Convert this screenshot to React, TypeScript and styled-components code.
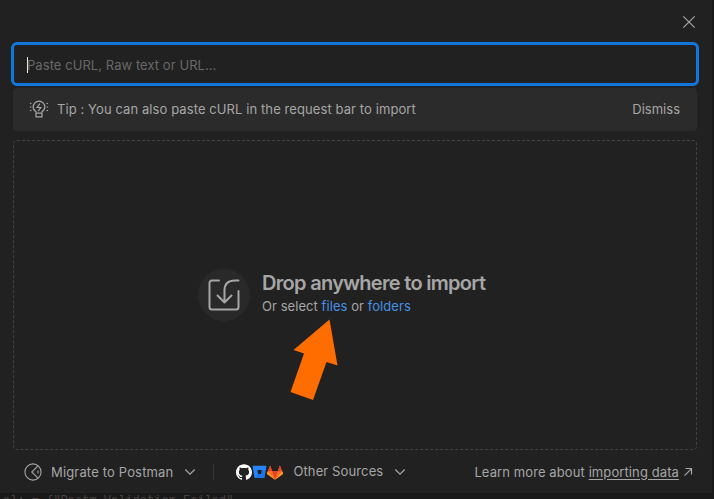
import React from 'react';
import styled, { createGlobalStyle } from 'styled-components';
import { SiGithub } from 'react-icons/si';

const GlobalStyle = createGlobalStyle`
  * { box-sizing: border-box; }
  html, body { margin: 0; padding: 0; background: #171717; overflow: hidden; }
  body { font-family: Inter, "Liberation Sans", sans-serif; font-size: 13px; color: #a6a6a6; }
`;

const Page = styled.div`
  width: 714px;
  height: 499px;
  overflow: hidden;
  background: #191919;
`;

const Dialog = styled.section`
  width: 712px;
  height: 493px;
  padding: 0 15px 0 13px;
  background: #212121;
  display: flex;
  flex-direction: column;
`;

const Header = styled.header`
  height: 42px;
  display: flex;
  flex-shrink: 0;
  justify-content: flex-end;
  padding: 15px 1px 0 0;
`;

const IconButton = styled.button`
  width: 14px;
  height: 14px;
  padding: 0;
  border: 0;
  background: none;
  color: #a6a6a6;
  svg { display: block; }
`;

const InputField = styled.div`
  height: 44px;
  flex-shrink: 0;
  margin: 0 -2px;
  padding-left: 13px;
  border: 3px solid #1277dc;
  border-radius: 6px;
  display: flex;
  align-items: center;
`;

const Caret = styled.span`
  width: 1px;
  height: 16px;
  margin-top: 2px;
  background: #f0f0f0;
`;

const Placeholder = styled.span`
  color: #686868;
  letter-spacing: 0.06px;
  margin-left: -1px;
  padding-top: 2px;
`;

const Tip = styled.div`
  height: 43px;
  flex-shrink: 0;
  margin-top: 2px;
  padding: 0 17px 2px 16px;
  border-radius: 4px;
  background: #2b2b2b;
  display: flex;
  align-items: center;
  svg { flex-shrink: 0; }
`;

const TipText = styled.span`
  flex: 1;
  margin-left: 8px;
  letter-spacing: 0.09px;
`;

const DropZone = styled.main`
  height: 310px;
  flex-shrink: 0;
  margin-top: 9px;
  border: 1px dashed #424242;
  border-radius: 4px;
  display: flex;
  align-items: flex-start;
  padding: 128px 0 0 184px;
  position: relative;
`;

const DropIcon = styled.div`
  width: 52px;
  height: 52px;
  border-radius: 50%;
  background: #292929;
  display: grid;
  place-items: center;
  margin-right: 12px;
`;

const DropText = styled.div`
  padding-top: 2px;
`;

const Title = styled.h1`
  margin: 0;
  font-size: 20px;
  line-height: 25px;
  font-weight: 600;
  letter-spacing: -0.7px;
`;

const Subtitle = styled.p`
  margin: 0;
  line-height: 20px;
  letter-spacing: 0.06px;
`;

const Link = styled.a`
  color: #4391e6;
`;

const Pointer = styled.svg`
  position: absolute;
  left: 274px;
  top: 177px;
`;

const Footer = styled.footer`
  flex: 1;
  display: flex;
  align-items: center;
  padding: 0 3px 0 11px;
`;

const Label = styled.span<{ $gap: number; $spacing: number; $lift?: number }>`
  margin-left: ${p => p.$gap}px;
  padding-bottom: ${p => p.$lift ?? 0}px;
  letter-spacing: ${p => p.$spacing}px;
  white-space: nowrap;
`;

const Chevron = styled.svg`
  margin-left: 11px;
`;

const Divider = styled.i`
  width: 1px;
  height: 16px;
  margin: 0 22px 0 17px;
  background: #343434;
`;

const Logos = styled.span`
  display: flex;
  align-items: center;
  padding-top: 1px;
`;

const Learn = styled.span`
  margin-left: auto;
  letter-spacing: 0.1px;
  white-space: nowrap;
  u { text-underline-offset: 2px; }
`;

const LearnArrow = styled.svg`
  margin-left: 2px;
`;

const Backdrop = styled.div`
  height: 6px;
  overflow: hidden;
  padding: 1px 0 0 3px;
  background: #191919;
  color: #4a4141;
  font: 12px/15px "Liberation Mono", monospace;
  white-space: pre;
`;

const Down = () => (
  <Chevron width="12" height="8" viewBox="0 0 12 8" fill="none" stroke="#a6a6a6" strokeWidth="1.2">
    <path d="M1.3 1.5 6 6.2l4.7-4.7" />
  </Chevron>
);

const Bulb = () => (
  <svg width="20" height="20" viewBox="0 0 20 20" fill="none" stroke="#a6a6a6" strokeWidth="1.2">
    <path d="M7 14.2v-1.5C5.3 11.7 4.2 10 4.2 8a5.8 5.8 0 0 1 11.6 0c0 2-1.1 3.7-2.8 4.7v1.5ZM7 14.2v3.6h6v-3.6" />
    <path d="M10.8 4.7 8.2 8.5h3.6l-2.6 3.6" />
    <path d="M1 4.2l1.5.6M.8 8h1.6M1 11.8l1.5-.6M19 4.2l-1.5.6M19.2 8h-1.6M19 11.8l-1.5-.6" />
  </svg>
);

const Bitbucket = () => (
  <svg width="15" height="14" viewBox="0 0 15 14">
    <path fill="#2684ff" fillRule="evenodd" d="M1.2.8h12.7c.4 0 .6.3.5.7l-1.8 10.9c0 .3-.3.6-.6.6H3.1c-.3 0-.6-.3-.6-.6L.6 1.5c0-.4.2-.7.6-.7ZM5.4 4.9l.7 4h3.1l.6-4Z" />
    <path fill="#0f58c2" d="m13.8 4.9-1.2 7.5c0 .3-.3.6-.6.6H3.1L6.1 8.9h3.1l.6-4Z" opacity=".35" />
  </svg>
);

const Gitlab = () => (
  <svg width="16" height="15" viewBox="0 0 16 15">
    <path fill="#fc6d26" d="M8 14.7.5 9.2C.1 8.9 0 8.4.1 8L3.1.5l2.1 5.4h5.6L12.9.5l3 7.5c.1.4 0 .9-.4 1.2Z" />
    <path fill="#e24329" d="m5.2 5.9 2.8 8.8 2.8-8.8ZM1 5.9 3.1.5l2.1 5.4ZM15 5.9 12.9.5l-2.1 5.4Z" />
    <path fill="#fca326" d="m.7 6.6 7.3 8.1L.5 9.2C0 8.8 0 8.4.1 8ZM15.3 6.6 8 14.7l7.5-5.5c.5-.4.5-.8.4-1.2Z" />
  </svg>
);

export default function App() {
  return (
    <Page>
      <GlobalStyle />
      <Dialog>
        <Header>
          <IconButton aria-label="Close">
            <svg width="14" height="14" viewBox="0 0 14 14" stroke="currentColor" strokeWidth="1.2">
              <path d="m1.3 1.3 11.4 11.4M12.7 1.3 1.3 12.7" />
            </svg>
          </IconButton>
        </Header>
        <InputField>
          <Caret />
          <Placeholder>Paste cURL, Raw text or URL...</Placeholder>
        </InputField>
        <Tip>
          <Bulb />
          <TipText>Tip : You can also paste cURL in the request bar to import</TipText>
          <span>Dismiss</span>
        </Tip>
        <DropZone>
          <DropIcon>
            <svg width="34" height="34" viewBox="0 0 34 34" fill="none" stroke="#a6a6a6" strokeWidth="2" strokeLinecap="round" strokeLinejoin="round">
              <path d="M12 2.5H5A2.5 2.5 0 0 0 2.5 5v24A2.5 2.5 0 0 0 5 31.5h24a2.5 2.5 0 0 0 2.5-2.5V13" />
              <path d="M31.5 2.5H28c-7 0-10.5 4-10.5 10V24.5M10.5 17.5l7 7 7-7" />
            </svg>
          </DropIcon>
          <DropText>
            <Title>Drop anywhere to import</Title>
            <Subtitle>Or select <Link>files</Link> or <Link>folders</Link></Subtitle>
          </DropText>
          <Pointer width="54" height="84" viewBox="0 0 54 84">
            <path fill="#ff6c00" d="M41.5 1.5 49.5 47.5 38.5 44 25 82 2.5 74 16 35.5 5.5 32Z" />
          </Pointer>
        </DropZone>
        <Footer>
          <svg width="18" height="18" viewBox="0 0 18 18" fill="none" stroke="#a6a6a6" strokeWidth="1.1">
            <circle cx="9" cy="9" r="8.1" />
            <path d="M14.2 2.7 7.8 9l6.4 6.3M14 7.5v3" />
          </svg>
          <Label $gap={9} $spacing={0.16}>Migrate to Postman</Label>
          <Down />
          <Divider />
          <Logos>
            <SiGithub size={16} color="#fff" />
            <Bitbucket />
            <Gitlab />
          </Logos>
          <Label $gap={10} $spacing={0.12} $lift={2}>Other Sources</Label>
          <Down />
          <Learn>Learn more about <u>importing data</u></Learn>
          <LearnArrow width="13" height="10" viewBox="0 0 13 10" fill="none" stroke="#a6a6a6" strokeWidth="1.2">
            <path d="m3.5 8.6 6.8-6.8M4.5 1.5h6v6" />
          </LearnArrow>
        </Footer>
      </Dialog>
      <Backdrop>{'al: = {"Postm Validation Failed"'}</Backdrop>
    </Page>
  );
}
